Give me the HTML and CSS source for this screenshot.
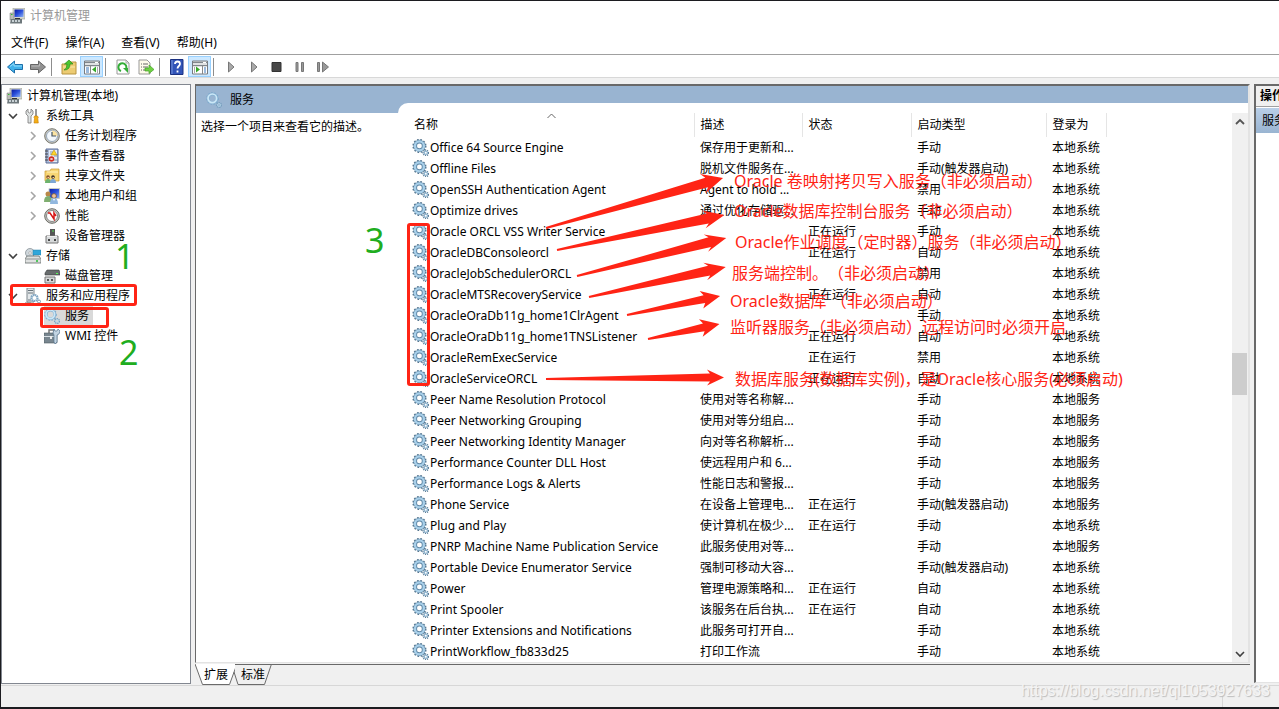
FILE: index.html
```html
<!DOCTYPE html>
<html lang="zh-CN">
<head>
<meta charset="utf-8">
<title>计算机管理</title>
<link rel="stylesheet" href="styles.css">
</head>
<body>
<svg class="defs" aria-hidden="true">
  <defs>
    <linearGradient id="screen" x1="0" y1="0" x2="1" y2="1"><stop offset="0" stop-color="#0a1a9c"/><stop offset=".5" stop-color="#2b50dc"/><stop offset="1" stop-color="#8fb4f4"/></linearGradient>
  </defs>
  <symbol id="pc" viewBox="0 0 16 16"><path d="M4 0h12v11H4z" fill="#d5d8d2" stroke="#9a9d96" stroke-width=".6"/><path d="M5.500 1.500h9v7.500h-9z" fill="url(#screen)"/><path d="M1 5h4v7H1z" fill="#b9bdb6" stroke="#777" stroke-width=".5"/><path d="M2 6.500h1.500" stroke="#3b3"/><path d="M2 11h11v4.500H1z" fill="#6e787c"/><path d="M3 13h2m1 0h2m1 0h2" stroke="#e6eef2" stroke-width="1.500"/><path d="M6 10.500h5" stroke="#333"/></symbol>
  <symbol id="gear" viewBox="0 0 16 16"><circle cx="7" cy="6.500" r="5.900" fill="none" stroke="#56768f" stroke-width="1.500" stroke-dasharray="1.600 1.500"/><circle cx="7" cy="6.500" r="4" fill="#fff" stroke="#6088a6" stroke-width="3.400"/><circle cx="7" cy="6.500" r="4.200" fill="none" stroke="#a9d0ea" stroke-width="2.200"/><circle cx="13" cy="13" r="2.500" fill="#fff" stroke="#5d7f99" stroke-width="1.500" stroke-dasharray="1 .8"/><circle cx="13" cy="13" r="1.500" fill="#fff" stroke="#8fb4ce" stroke-width="1.200"/></symbol>
  <symbol id="gearlight" viewBox="0 0 16 16"><circle cx="6.500" cy="6.500" r="5.700" fill="none" stroke="#78a6ca" stroke-width="1.200" stroke-dasharray="1.600 1.500"/><circle cx="6.500" cy="6.500" r="4.300" fill="none" stroke="#86b2d3" stroke-width="2.800"/><circle cx="6.300" cy="6.300" r="4.300" fill="none" stroke="#cbe7f7" stroke-width="1.700"/><circle cx="13" cy="13" r="2.200" fill="none" stroke="#78a0bf" stroke-width="1.800" stroke-dasharray="1.200 .6"/><circle cx="13" cy="13" r="1.500" fill="none" stroke="#b4d5e9" stroke-width=".8"/></symbol>
  <symbol id="tools" viewBox="0 0 16 16"><path d="M3 1v3l1.500 1L6 4V1l2 2v3L6 8v7H3V8L1 6V3z" fill="#dfe3e3" stroke="#777" stroke-width=".8"/><path d="M11 1v7" stroke="#777" stroke-width="1.500"/><path d="M9.500 8h3l.8 1.500-.5 1 .5 4.500H9l.5-4.500-.5-1z" fill="#f4ae16" stroke="#c77c04" stroke-width=".6"/></symbol>
  <symbol id="clock" viewBox="0 0 16 16"><circle cx="8" cy="8" r="7.300" fill="#c9c9c4" stroke="#77776f"/><circle cx="8" cy="8" r="5.500" fill="#f2f7fc" stroke="#9ab"/><path d="M8 8h5.500A5.500 5.500 0 0 0 8 2.500z" fill="#fbe3a2"/><path d="M8 4v4h4" fill="none" stroke="#456" stroke-width="1.200"/></symbol>
  <symbol id="event" viewBox="0 0 16 16"><path d="M2 1h12v14H2z" fill="#a9b9d8" stroke="#5d6f98"/><path d="M5 2h8v12H5z" fill="#e6ecf6"/><path d="M1 3h3M1 6h3M1 9h3M1 12h3" stroke="#444"/><path d="M6 4h3M6 6h3M10 8h3M10 12h3" stroke="#89a"/><path d="m10 2 3 5H7z" fill="#ffd52b" stroke="#b68a00" stroke-width=".5"/><circle cx="7.500" cy="11" r="2.800" fill="#d22b20"/><path d="m6.500 10 2 2m0-2-2 2" stroke="#fff" stroke-width=".9"/></symbol>
  <symbol id="share" viewBox="0 0 16 16"><path d="M1 3h5l1-2h8v12H1z" fill="#f7d675" stroke="#c99a2e" stroke-width=".7"/><path d="M3 4h11" stroke="#fff2bd"/><circle cx="4" cy="9" r="1.800" fill="#87542d"/><circle cx="9" cy="9" r="1.800" fill="#3b3027"/><path d="M1 15q0-4 3-4t3 4z" fill="#6db36d"/><path d="M6 15q0-4 3-4t3 4z" fill="#7da7d5"/><path d="M3.500 9.500h1.500M8.500 9.500H10" stroke="#f2c69e"/></symbol>
  <symbol id="users" viewBox="0 0 16 16"><path d="M5 .5h10.500v10H5z" fill="url(#screen)" stroke="#c9ccc6"/><circle cx="4" cy="6" r="2.500" fill="#b98848"/><path d="M0 14q0-6 4-6t4 6z" fill="#7fae70"/><circle cx="10" cy="8" r="2.400" fill="#efc49a" stroke="#71502e" stroke-width=".8"/><path d="M6 16q0-6 4-6t4 6z" fill="#92b8df"/><path d="m9 11 1 2 1-2" fill="#fff"/></symbol>
  <symbol id="perf" viewBox="0 0 16 16"><circle cx="8" cy="8" r="7.300" fill="#c9c9c4" stroke="#6a6a64"/><circle cx="8" cy="8" r="5.500" fill="#fff" stroke="#888"/><path d="m4 5 2 0 4 6V5l2 3" fill="none" stroke="#d61616" stroke-width="1.500"/></symbol>
  <symbol id="device" viewBox="0 0 16 16"><path d="M6 1h5v7H6z" fill="#555"/><path d="M8 3h2" stroke="#55e255"/><path d="M2 8h12v7H2z" fill="#d6d9da" stroke="#777"/><path d="M3 8.500h10" stroke="#eee"/><path d="M5 11v2M11 11v2" stroke="#222" stroke-width="1.600"/></symbol>
  <symbol id="storage" viewBox="0 0 16 16"><circle cx="5" cy="5" r="4.500" fill="#cfd7dc" stroke="#7c878d" stroke-width=".7"/><circle cx="5" cy="5" r="1.300" fill="#fff" stroke="#888" stroke-width=".5"/><path d="M8 2h8v5H8z" fill="#30a6da" stroke="#267da6" stroke-width=".5"/><path d="M2 8h12l2 3v4H0v-4z" fill="#dfe1e0" stroke="#63696a" stroke-width=".8"/><path d="M1 11h14" stroke="#8c9293"/><path d="M11 13h2" stroke="#25bc33" stroke-width="1.500"/></symbol>
  <symbol id="disk" viewBox="0 0 16 16"><path d="M3 2h12l1 3v2H1V5z" fill="#686c6d" stroke="#393d3e" stroke-width=".6"/><path d="M12 5.500h2" stroke="#5f5"/><path d="M1 9h10v6H1z" fill="#d6d9da" stroke="#777"/><path d="M4 11v2M8 11v2" stroke="#222" stroke-width="1.400"/></symbol>
  <symbol id="server" viewBox="0 0 16 16"><path d="M2 0h7v14H2z" fill="#e4e8ea" stroke="#7c868c"/><path d="M3 2.500h5M3 5h5M3 12h3" stroke="#66727a"/><circle cx="9.500" cy="10" r="3" fill="#fff" stroke="#7fa6c4" stroke-width="2.200" stroke-dasharray="1.500 .5"/><circle cx="14" cy="13.500" r="1.500" fill="#fff" stroke="#7898b0"/><path d="M0 15h6" stroke="#777"/></symbol>
  <symbol id="wmi" viewBox="0 0 16 16"><path d="M5 5V2h5v3" fill="none" stroke="#777" stroke-width="1.500"/><path d="M0 5h13v10H0z" fill="#78868f" stroke="#4f5b63" stroke-width=".6"/><path d="M0 8.500h13" stroke="#d8e0e5"/><path d="M6 8h2v3H6z" fill="#eee"/><path d="m10 1 1 2h2l1-2 2 2-1 3-2 1v7l-2 2-1-2V7L9 5z" fill="#c3d4e2" stroke="#587590" stroke-width=".7"/></symbol>
  <symbol id="chev-down" viewBox="0 0 10 10"><path d="m1 3 4 4 4-4" fill="none" stroke="#404040" stroke-width="1.600"/></symbol>
  <symbol id="chev-right" viewBox="0 0 10 10"><path d="m3 1 4 4-4 4" fill="none" stroke="#a6a6a6" stroke-width="1.600"/></symbol>
  <symbol id="chev-up" viewBox="0 0 10 10"><path d="m1 7 4-4 4 4" fill="none" stroke="#555" stroke-width="1.800"/></symbol>
  <symbol id="play" viewBox="0 0 16 16"><path d="M5.500 3v10l5.500-5z" fill="#aaa" stroke="#777"/></symbol>
</svg>

<div class="window">
  <header class="titlebar"><svg class="icon"><use href="#pc"/></svg><h1>计算机管理</h1></header>
  <nav class="menu" aria-label="菜单">
    <button>文件(F)</button><button>操作(A)</button><button>查看(V)</button><button>帮助(H)</button>
  </nav>
  <div class="toolbar" role="toolbar" aria-label="工具栏">
    <button aria-label="后退"><svg class="icon" viewBox="0 0 16 16"><path d="m.5 8 7-6v3.500h8v5h-8V14z" fill="#40b1ea" stroke="#1d6ea8"/><path d="m3 7.500 4-3V7h8" fill="none" stroke="#93dcfb"/></svg></button>
    <button aria-label="前进"><svg class="icon" viewBox="0 0 16 16"><path d="m15.500 8-7-6v3.500h-8v5h8V14z" fill="#929292" stroke="#666"/><path d="M1.500 7h8V4.500" fill="none" stroke="#bbb"/></svg></button>
    <span class="sep"></span>
    <button aria-label="上一级"><svg class="icon" viewBox="0 0 16 16"><path d="M1 5h5l2-2h7v12H1z" fill="#eccb72" stroke="#b89440"/><path d="M2 8h12" stroke="#fae8ac"/><path d="M3 11q3-1 3-6H3.500L8 1l4 4H9q0 6-6 6z" fill="#4bc52e" stroke="#2c8e1a" stroke-width=".7"/></svg></button>
    <button class="on" aria-label="显示控制台树"><svg class="icon" viewBox="0 0 16 16"><path d="M.5 2h15v13H.5z" fill="#fff" stroke="#777b80"/><path d="M1 3.500h14M1 6.500h14" stroke="#80868c" stroke-width="1.500"/><path d="M11 3.500h3" stroke="#fff"/><path d="M6.500 7v8" stroke="#888"/><path d="M2 9h3M2 11h3M2 13h3" stroke="#3975b8"/><path d="m8 10.500 4-3v6z" fill="#35a827"/><path d="M13.500 8v6" stroke="#aaa"/></svg></button>
    <span class="sep"></span>
    <button aria-label="刷新"><svg class="icon" viewBox="0 0 16 16"><path d="M2 1h9l3 3v11H2z" fill="#fff" stroke="#999"/><path d="M11 1v3h3" fill="none" stroke="#aaa"/><path d="M6 12a4 4 0 1 1 5-2" fill="none" stroke="#33ad37" stroke-width="2"/><path d="M8 9h5v5z" fill="#33ad37"/></svg></button>
    <button aria-label="导出列表"><svg class="icon" viewBox="0 0 16 16"><path d="M1 1h8l3 3v11H1z" fill="#fffbea" stroke="#999"/><path d="M3 5h1m1 0h5M3 8h1m1 0h5M3 11h1m1 0h5" stroke="#666"/><path d="M7 9h4V6l5 4.500-5 4V12H7z" fill="#6fd143" stroke="#44a026" stroke-width=".7"/></svg></button>
    <span class="sep"></span>
    <button aria-label="帮助"><svg class="icon" viewBox="0 0 16 16"><path d="M1.500.5h12.500v15H1.500z" fill="#3154b8" stroke="#1b3181"/><path d="M3 1v14" stroke="#7694dd"/><path d="M6 5q0-2.500 2.500-2.500T11 5c0 2-2.500 2-2.500 4.500M8.500 11.500v2" fill="none" stroke="#fff" stroke-width="1.800"/></svg></button>
    <button class="on" aria-label="显示操作窗格"><svg class="icon" viewBox="0 0 16 16"><path d="M.5 2h15v13H.5z" fill="#fff" stroke="#777b80"/><path d="M1 3.500h14M1 6.500h14" stroke="#80868c" stroke-width="1.500"/><path d="M11 3.500h3" stroke="#fff"/><path d="M10.500 7v8" stroke="#888"/><path d="M12 9h2M12 11h2M12 13h2" stroke="#3975b8"/><path d="m8 10.500-4-3v6z" fill="#35a827"/><path d="M2.500 8v6" stroke="#aaa"/></svg></button>
    <span class="sep"></span>
    <button aria-label="启动"><svg class="icon"><use href="#play"/></svg></button>
    <button aria-label="恢复"><svg class="icon"><use href="#play"/></svg></button>
    <button aria-label="停止"><svg class="icon" viewBox="0 0 16 16"><path d="M3 3.500h9v9H3z" fill="#484848" stroke="#333"/></svg></button>
    <button aria-label="暂停"><svg class="icon" viewBox="0 0 16 16"><path d="M4 3.500h2v9H4zM9.500 3.500h2v9h-2z" fill="#999" stroke="#777"/></svg></button>
    <button aria-label="重新启动"><svg class="icon" viewBox="0 0 16 16"><path d="M2.500 3.500h2v9h-2zM7.500 3v10l6-5z" fill="#999" stroke="#777"/></svg></button>
  </div>

  <main class="panes">
    <nav class="tree" aria-label="控制台树">
      <ul>
        <li><button class="lv0"><svg class="icon"><use href="#pc"/></svg><span>计算机管理(本地)</span></button></li>
        <li><button class="lv1"><svg class="chev"><use href="#chev-down"/></svg><svg class="icon"><use href="#tools"/></svg><span>系统工具</span></button></li>
        <li><button class="lv2"><svg class="chev"><use href="#chev-right"/></svg><svg class="icon"><use href="#clock"/></svg><span>任务计划程序</span></button></li>
        <li><button class="lv2"><svg class="chev"><use href="#chev-right"/></svg><svg class="icon"><use href="#event"/></svg><span>事件查看器</span></button></li>
        <li><button class="lv2"><svg class="chev"><use href="#chev-right"/></svg><svg class="icon"><use href="#share"/></svg><span>共享文件夹</span></button></li>
        <li><button class="lv2"><svg class="chev"><use href="#chev-right"/></svg><svg class="icon"><use href="#users"/></svg><span>本地用户和组</span></button></li>
        <li><button class="lv2"><svg class="chev"><use href="#chev-right"/></svg><svg class="icon"><use href="#perf"/></svg><span>性能</span></button></li>
        <li><button class="lv2"><svg class="chev"></svg><svg class="icon"><use href="#device"/></svg><span>设备管理器</span></button></li>
        <li><button class="lv1"><svg class="chev"><use href="#chev-down"/></svg><svg class="icon"><use href="#storage"/></svg><span>存储</span></button></li>
        <li><button class="lv2"><svg class="chev"></svg><svg class="icon"><use href="#disk"/></svg><span>磁盘管理</span></button></li>
        <li><button class="lv1"><svg class="chev"><use href="#chev-down"/></svg><svg class="icon"><use href="#server"/></svg><span>服务和应用程序</span></button></li>
        <li><button class="lv2 current"><svg class="chev"></svg><span class="picked"><svg class="icon"><use href="#gearlight"/></svg><span>服务</span></span></button></li>
        <li><button class="lv2"><svg class="chev"></svg><svg class="icon"><use href="#wmi"/></svg><span>WMI 控件</span></button></li>
      </ul>
    </nav>

    <section class="center">
      <div class="view">
        <div class="banner"><svg class="icon"><use href="#gearlight"/></svg><h2>服务</h2></div>
        <div class="split">
          <p class="hint">选择一个项目来查看它的描述。</p>
          <div class="list">
            <table>
              <colgroup><col class="c-name"><col class="c-desc"><col class="c-state"><col class="c-start"><col class="c-logon"></colgroup>
              <thead><tr><th>名称<svg class="sort" viewBox="0 0 10 10"><path d="m1 7 4-4 4 4" fill="none" stroke="#666"/></svg></th><th>描述</th><th>状态</th><th>启动类型</th><th>登录为</th></tr></thead>
              <tbody>
                <tr><td><svg class="icon"><use href="#gear"/></svg>Office 64 Source Engine</td><td>保存用于更新和...</td><td></td><td>手动</td><td>本地系统</td></tr>
                <tr><td><svg class="icon"><use href="#gear"/></svg>Offline Files</td><td>脱机文件服务在...</td><td></td><td>手动(触发器启动)</td><td>本地系统</td></tr>
                <tr><td><svg class="icon"><use href="#gear"/></svg>OpenSSH Authentication Agent</td><td>Agent to hold ...</td><td></td><td>禁用</td><td>本地系统</td></tr>
                <tr><td><svg class="icon"><use href="#gear"/></svg>Optimize drives</td><td>通过优化存储驱...</td><td></td><td>手动</td><td>本地系统</td></tr>
                <tr><td><svg class="icon"><use href="#gear"/></svg>Oracle ORCL VSS Writer Service</td><td></td><td>正在运行</td><td>手动</td><td>本地系统</td></tr>
                <tr><td><svg class="icon"><use href="#gear"/></svg>OracleDBConsoleorcl</td><td></td><td>正在运行</td><td>自动</td><td>本地系统</td></tr>
                <tr><td><svg class="icon"><use href="#gear"/></svg>OracleJobSchedulerORCL</td><td></td><td></td><td>禁用</td><td>本地系统</td></tr>
                <tr><td><svg class="icon"><use href="#gear"/></svg>OracleMTSRecoveryService</td><td></td><td>正在运行</td><td>自动</td><td>本地系统</td></tr>
                <tr><td><svg class="icon"><use href="#gear"/></svg>OracleOraDb11g_home1ClrAgent</td><td></td><td></td><td>手动</td><td>本地系统</td></tr>
                <tr><td><svg class="icon"><use href="#gear"/></svg>OracleOraDb11g_home1TNSListener</td><td></td><td>正在运行</td><td>自动</td><td>本地系统</td></tr>
                <tr><td><svg class="icon"><use href="#gear"/></svg>OracleRemExecService</td><td></td><td>正在运行</td><td>禁用</td><td>本地系统</td></tr>
                <tr><td><svg class="icon"><use href="#gear"/></svg>OracleServiceORCL</td><td></td><td>正在运行</td><td>自动</td><td>本地系统</td></tr>
                <tr><td><svg class="icon"><use href="#gear"/></svg>Peer Name Resolution Protocol</td><td>使用对等名称解...</td><td></td><td>手动</td><td>本地服务</td></tr>
                <tr><td><svg class="icon"><use href="#gear"/></svg>Peer Networking Grouping</td><td>使用对等分组启...</td><td></td><td>手动</td><td>本地服务</td></tr>
                <tr><td><svg class="icon"><use href="#gear"/></svg>Peer Networking Identity Manager</td><td>向对等名称解析...</td><td></td><td>手动</td><td>本地服务</td></tr>
                <tr><td><svg class="icon"><use href="#gear"/></svg>Performance Counter DLL Host</td><td>使远程用户和 6...</td><td></td><td>手动</td><td>本地服务</td></tr>
                <tr><td><svg class="icon"><use href="#gear"/></svg>Performance Logs &amp; Alerts</td><td>性能日志和警报...</td><td></td><td>手动</td><td>本地服务</td></tr>
                <tr><td><svg class="icon"><use href="#gear"/></svg>Phone Service</td><td>在设备上管理电...</td><td>正在运行</td><td>手动(触发器启动)</td><td>本地服务</td></tr>
                <tr><td><svg class="icon"><use href="#gear"/></svg>Plug and Play</td><td>使计算机在极少...</td><td>正在运行</td><td>手动</td><td>本地系统</td></tr>
                <tr><td><svg class="icon"><use href="#gear"/></svg>PNRP Machine Name Publication Service</td><td>此服务使用对等...</td><td></td><td>手动</td><td>本地服务</td></tr>
                <tr><td><svg class="icon"><use href="#gear"/></svg>Portable Device Enumerator Service</td><td>强制可移动大容...</td><td></td><td>手动(触发器启动)</td><td>本地系统</td></tr>
                <tr><td><svg class="icon"><use href="#gear"/></svg>Power</td><td>管理电源策略和...</td><td>正在运行</td><td>自动</td><td>本地系统</td></tr>
                <tr><td><svg class="icon"><use href="#gear"/></svg>Print Spooler</td><td>该服务在后台执...</td><td>正在运行</td><td>自动</td><td>本地系统</td></tr>
                <tr><td><svg class="icon"><use href="#gear"/></svg>Printer Extensions and Notifications</td><td>此服务可打开自...</td><td></td><td>手动</td><td>本地系统</td></tr>
                <tr><td><svg class="icon"><use href="#gear"/></svg>PrintWorkflow_fb833d25</td><td>打印工作流</td><td></td><td>手动</td><td>本地系统</td></tr>
              </tbody>
            </table>
            <div class="scroll">
              <button aria-label="向上滚动"><svg class="chev"><use href="#chev-up"/></svg></button>
              <div class="track"><span class="before"></span><span class="thumb"></span><span class="after"></span></div>
              <button aria-label="向下滚动"><svg class="chev"><use href="#chev-down"/></svg></button>
            </div>
          </div>
        </div>
      </div>
      <div class="tabs">
        <button class="tab active"><svg viewBox="0 0 40 21"><path d="M0 0 7.500 20.500H34.500L42 0" fill="#fff" stroke="#6b6b6b"/></svg><span>扩展</span></button>
        <button class="tab"><svg viewBox="0 0 40 21"><path d="M2 8 6 20.500H32.500L39.500 0" fill="none" stroke="#6b6b6b"/></svg><span>标准</span></button>
      </div>
    </section>

    <aside class="actions">
      <h2>操作</h2>
      <button>服务</button>
    </aside>
  </main>
  <footer class="status"><span></span></footer>
</div>

<div class="marks">
  <span class="box box-apps"></span><span class="box box-services"></span><span class="box box-oracle"></span>
  <span class="num n1">1</span><span class="num n2">2</span><span class="num n3">3</span>
  <svg class="arrows" aria-hidden="true">
    <g fill="#ff2415">
      <path transform="translate(546 228) rotate(-15.800)" d="M0-1 167-5 163-10 184 0 163 10 167 5 0 1z"/>
      <path transform="translate(557 250) rotate(-11.800)" d="M0-1 154-5 150-9 171 0 150 9 154 5 0 1z"/>
      <path transform="translate(577 276) rotate(-14.300)" d="M0-1 137-5 133-9 154 0 133 9 137 5 0 1z"/>
      <path transform="translate(589 297) rotate(-12.400)" d="M0-1 123-5 119-9 140 0 119 9 123 5 0 1z"/>
      <path transform="translate(627 315) rotate(-11.600)" d="M0-1 79-4 76-9 95 0 76 9 79 4 0 1z"/>
      <path transform="translate(648 339) rotate(-11.800)" d="M0-1 57-4 54-9 73 0 54 9 57 4 0 1z"/>
      <path transform="translate(546 379) rotate(-.5)" d="M0-1 164-4 161-8 178 0 161 8 164 4 0 1z"/>
    </g>
  </svg>
  <span class="note t1">Oracle 卷映射拷贝写入服务（非必须启动）</span>
  <span class="note t2">Oracle数据库控制台服务（非必须启动）</span>
  <span class="note t3">Oracle作业调度（定时器）服务（非必须启动）</span>
  <span class="note t4">服务端控制。（非必须启动）</span>
  <span class="note t5">Oracle数据库 （非必须启动）</span>
  <span class="note t6">监听器服务（非必须启动）远程访问时必须开启</span>
  <span class="note t7">数据库服务(数据库实例)，是Oracle核心服务(必须启动)</span>
  <span class="watermark">https://blog.csdn.net/ql1053927633</span>
</div>
</body>
</html>
```
FILE: styles.css
```css
* { box-sizing: border-box; }
body {
  margin: 0;
  position: relative;
  height: 100vh;
  overflow: hidden;
  background: #1c1c20;
  padding: 1px 0 2px 1px;
  color: #000;
  font: 12px/20px "Noto Sans", "Noto Sans CJK SC", sans-serif;
}
button { border: 0; padding: 0; margin: 0; background: none; font: inherit; color: inherit; text-align: left; white-space: nowrap; }
h1, h2, p, ul { margin: 0; padding: 0; font-size: 12px; font-weight: 400; list-style: none; }
svg { display: block; flex: none; }
.defs { position: absolute; width: 0; height: 0; }
.icon { width: 16px; height: 16px; }
.chev { width: 10px; height: 10px; }

.window { height: 100%; display: flex; flex-direction: column; background: #f0f0f0; }
.titlebar { display: flex; align-items: center; gap: 5px; height: 29px; padding-left: 8px; background: #fff; }
.titlebar h1 { color: #999; }
.menu { display: flex; gap: 1px; height: 25px; padding: 1px 2px 0; background: #fff; border-bottom: 1px solid #a0a0a0; }
.menu button { padding: 0 8px; }
.toolbar { display: flex; align-items: center; height: 23px; padding: 1px 0 0 2px; background: #fff; border-bottom: 1px solid #d8d8d8; }
.toolbar button { display: flex; align-items: center; justify-content: center; width: 23px; height: 21px; }
.toolbar .on { background: #cce8ff; border: 1px solid #99d1ff; }
.sep { width: 1px; height: 18px; margin: 0 5px 0 2px; background: #8d8d8d; }

.panes { flex: 1; min-height: 0; display: flex; gap: 4px; padding-top: 6px; }
.tree { width: 190px; flex: none; margin-bottom: 1px; padding-top: 1px; background: #fff; border: 1px solid #828790; }
.tree button { display: flex; align-items: center; height: 20px; width: 100%; }
.tree .lv0 { padding-left: 4px; gap: 5px; }
.tree .lv1 { padding-left: 6px; gap: 5px; }
.tree .lv1 .icon { margin-left: 2px; }
.tree .lv2 { padding-left: 26px; gap: 5px; }
.tree .lv2 > .icon, .picked { margin-left: 1px; }
.picked { display: flex; align-items: center; gap: 5px; padding-right: 4px; background: #d9d9d9; }

.center { flex: 1; min-width: 0; display: flex; flex-direction: column; }
.view { flex: 1; min-height: 0; display: flex; flex-direction: column; background: #fff; border: 1px solid #696969; border-top-width: 2px; border-right: 2px solid #e3e3e3; border-bottom: 1px solid #e3e3e3; }
.banner { display: flex; align-items: center; gap: 8px; height: 27px; padding-left: 10px; background: #99b4d1; }
.split { flex: 1; min-height: 0; display: flex; }
.hint { width: 202px; flex: none; padding: 4px 0 0 5px; white-space: nowrap; }
.list { flex: 1; min-width: 0; display: flex; align-items: flex-start; justify-content: space-between; margin-top: -10px; padding-top: 10px; background: #fff; border-radius: 10px 0 0; }
table { width: 708px; border-collapse: collapse; table-layout: fixed; }
.c-name { width: 296px; }
.c-desc { width: 108px; }
.c-state { width: 109px; }
.c-start { width: 135px; }
.c-logon { width: 60px; }
th { height: 24px; padding: 0 0 0 6px; font-weight: 400; text-align: left; border-right: 1px solid #e5e5e5; }
th:first-child { position: relative; padding-left: 16px; }
.sort { position: absolute; left: 148px; top: -2px; width: 11px; height: 10px; }
td { height: 21px; padding: 0 0 0 6px; line-height: 20px; white-space: nowrap; }
td:first-child { padding-left: 14px; }
td .icon { float: left; width: 17px; height: 17px; margin: 1px 1px 0 0; }
.scroll { align-self: stretch; display: flex; flex-direction: column; width: 16px; flex: none; background: #f0f0f0; }
.scroll button { display: flex; justify-content: center; align-items: center; height: 17px; }
.track { flex: 1; display: flex; flex-direction: column; }
.before { flex: 223; }
.thumb { flex: 42; width: 15px; background: #cdcdcd; }
.after { flex: 250; }
.tabs { display: flex; height: 21px; margin-top: 1px; border-top: 1px solid #696969; }
.tab { position: relative; width: 38px; height: 20px; padding-left: 9px; }
.tab.active { width: 37px; }
.tab svg { position: absolute; left: 0; top: -1px; width: 40px; height: 21px; }
.tab span { position: relative; }

.actions { width: 25px; flex: none; margin-bottom: 2px; background: #fff; border: 2px solid #696969; border-right: 0; border-bottom: 1px solid #e3e3e3; overflow: hidden; }
.actions h2 { height: 21px; padding-left: 4px; background: #f0f0f0; border-bottom: 1px solid #a0a0a0; font-weight: 700; white-space: nowrap; }
.actions button { display: block; width: 100%; height: 25px; margin-top: 1px; padding-left: 6px; background: linear-gradient(#b9cfe8, #99b4d1); }
.status { display: flex; justify-content: flex-end; height: 22px; border-top: 1px solid #d7d7d7; }
.status span { width: 57px; margin-top: 3px; border-left: 1px solid #d7d7d7; }

/* Hand-drawn annotations laid over the window */
.marks { position: absolute; inset: 0; pointer-events: none; }
.marks > * { position: absolute; white-space: nowrap; }
.box { border: 3px solid #ff2415; border-radius: 3px; }
.box-apps { left: 10px; top: 284px; width: 127px; height: 22px; }
.box-services { left: 40px; top: 307px; width: 69px; height: 21px; }
.box-oracle { left: 407px; top: 223px; width: 23px; height: 163px; }
.num { color: #20ad20; font-size: 34px; line-height: 40px; }
.n1 { left: 115px; top: 236px; }
.n2 { left: 119px; top: 332px; }
.n3 { left: 365px; top: 220px; }
.arrows { left: 0; top: 0; width: 100%; height: 100%; }
.note { color: #ff2415; font-size: 16px; line-height: 20px; text-spacing-trim: space-all; }
.t1 { left: 734px; top: 171px; }
.t2 { left: 734px; top: 201px; }
.t3 { left: 735px; top: 232px; }
.t4 { left: 732px; top: 263px; }
.t5 { left: 730px; top: 291px; }
.t6 { left: 730px; top: 317px; }
.t7 { left: 735px; top: 369px; }
.watermark { right: 9px; bottom: 8px; color: #f4f4f4; font: 16px/20px "Liberation Sans", sans-serif; text-shadow: 1px 1px 1px #bbb; }
```
